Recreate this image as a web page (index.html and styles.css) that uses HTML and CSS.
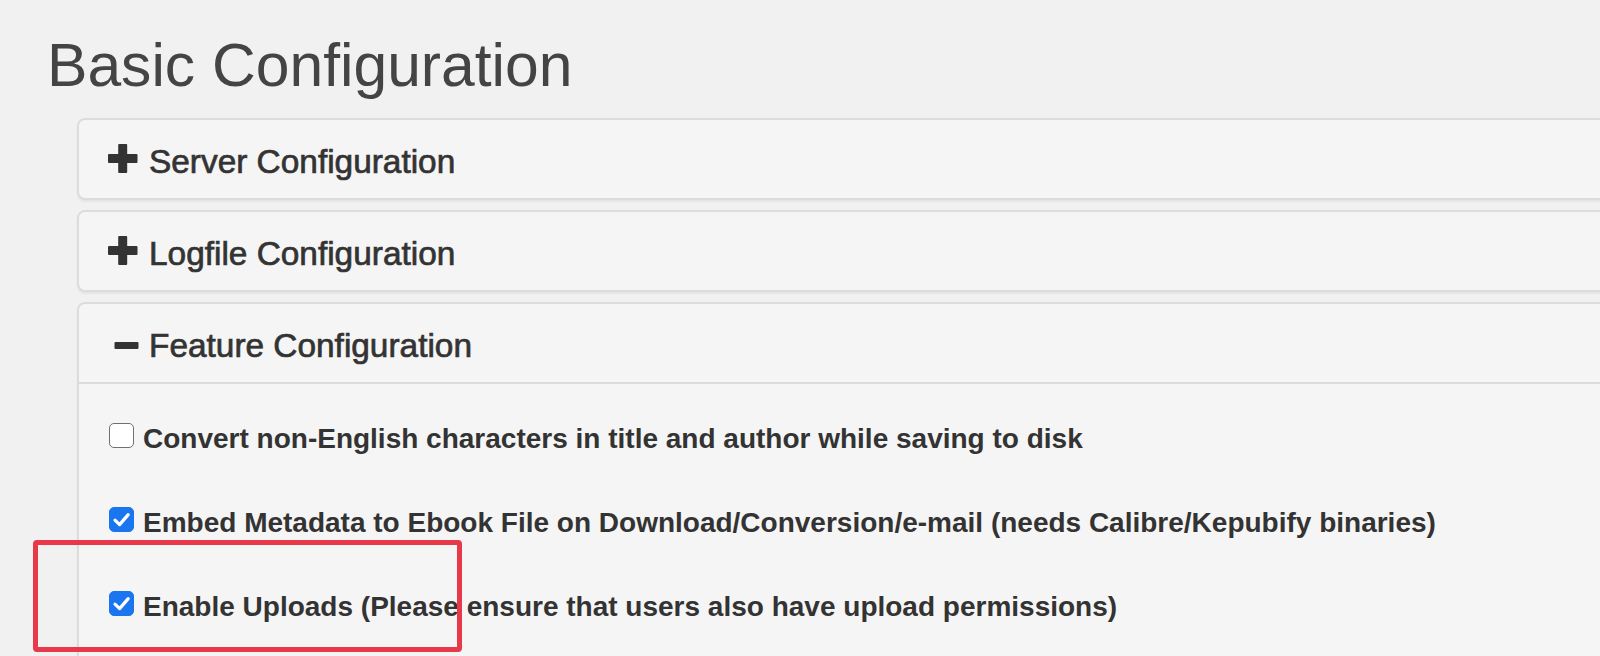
FILE: index.html
```html
<!DOCTYPE html>
<html lang="en">
<head>
<meta charset="utf-8">
<title>Basic Configuration</title>
<link rel="stylesheet" href="styles.css">
</head>
<body>
<div class="page">
  <h1 class="title">Basic Configuration</h1>
  <div class="accordion">
    <section class="panel">
      <div class="panel-heading"><svg class="icon" width="31" height="29" viewBox="0 0 31 29"><rect x="0" y="10" width="29.5" height="9" rx="1"/><rect x="10.2" y="0" width="9" height="29" rx="1"/></svg><span class="panel-title">Server Configuration</span></div>
    </section>
    <section class="panel">
      <div class="panel-heading"><svg class="icon" width="31" height="29" viewBox="0 0 31 29"><rect x="0" y="10" width="29.5" height="9" rx="1"/><rect x="10.2" y="0" width="9" height="29" rx="1"/></svg><span class="panel-title">Logfile Configuration</span></div>
    </section>
    <section class="panel">
      <div class="panel-heading"><svg class="icon" width="31" height="29" viewBox="0 0 31 29"><rect x="6.5" y="14" width="24" height="7" rx="1"/></svg><span class="panel-title">Feature Configuration</span></div>
      <div class="panel-body">
        <label class="check">
          <span class="box"></span>
          <span class="label-text">Convert non-English characters in title and author while saving to disk</span>
        </label>
        <label class="check">
          <span class="box checked"><svg width="25" height="25" viewBox="0 0 25 25"><path d="M6 13.2 L10.6 17.6 L19.2 7.6" fill="none" stroke="#fff" stroke-width="3.2" stroke-linecap="round" stroke-linejoin="round"/></svg></span>
          <span class="label-text">Embed Metadata to Ebook File on Download/Conversion/e-mail (needs Calibre/Kepubify binaries)</span>
        </label>
        <label class="check">
          <span class="box checked"><svg width="25" height="25" viewBox="0 0 25 25"><path d="M6 13.2 L10.6 17.6 L19.2 7.6" fill="none" stroke="#fff" stroke-width="3.2" stroke-linecap="round" stroke-linejoin="round"/></svg></span>
          <span class="label-text">Enable Uploads (Please ensure that users also have upload permissions)</span>
        </label>
      </div>
    </section>
  </div>
  <div class="highlight"></div>
</div>
</body>
</html>
```

FILE: styles.css
```css
html, body {
  margin: 0;
  height: 100%;
  overflow: hidden;
}

body {
  background: #f1f1f1;
  font-family: "Liberation Sans", Arial, sans-serif;
  color: #333;
}

.page {
  position: relative;
  height: 100%;
}

.title {
  margin: 0;
  padding: 32px 0 0 47px;
  font-size: 60.6px;
  font-weight: normal;
  line-height: 66px;
  color: #444;
}

.accordion {
  margin: 20px 0 0 77px;
  width: 1700px;
  display: flex;
  flex-direction: column;
  gap: 10px;
}

.panel {
  background: #f5f5f5;
  border: 2px solid #dcdcdc;
  border-radius: 8px;
  box-shadow: 0 2px 2px rgba(0, 0, 0, 0.05);
}

.panel-heading {
  padding: 23px 20px 18px 29px;
  font-size: 33.4px;
  line-height: 37px;
  white-space: nowrap;
  color: #333;
}

.icon {
  vertical-align: baseline;
  margin-right: 10px;
  fill: #333;
}

.panel-title {
  -webkit-text-stroke: 0.7px #333;
}

.panel-body {
  border-top: 2px solid #dcdcdc;
  padding: 39px 30px 60px;
  display: flex;
  flex-direction: column;
  gap: 52px;
}

.check {
  display: flex;
  align-items: flex-start;
  gap: 9px;
  font-size: 28px;
  font-weight: bold;
  line-height: 32px;
  white-space: nowrap;
  color: #333;
}

.box {
  flex: none;
  width: 25px;
  height: 25px;
  box-sizing: border-box;
  border-radius: 5px;
  background: #fff;
  border: 1.5px solid #707070;
}

.box svg {
  display: block;
  margin: -1.5px;
}

.box.checked {
  background: #1a76f0;
  border-color: #1a76f0;
}

.highlight {
  position: absolute;
  left: 33px;
  top: 540px;
  width: 429px;
  height: 112px;
  box-sizing: border-box;
  border: 5px solid #e8394a;
  border-radius: 4px;
}
```
